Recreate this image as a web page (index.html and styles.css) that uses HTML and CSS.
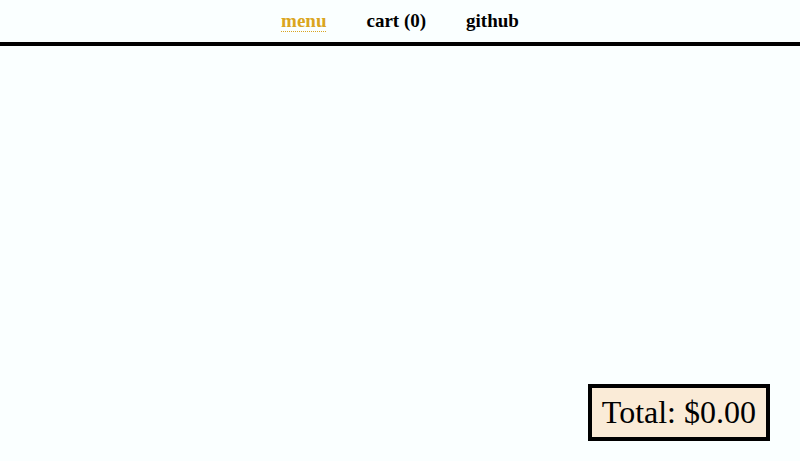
FILE: index.html
```html
<!DOCTYPE html>
<html lang="en">
<head>
<meta charset="utf-8">
<meta name="viewport" content="width=device-width, initial-scale=1">
<title>Menu</title>
<link rel="stylesheet" href="styles.css">
</head>
<body>
<nav class="nav">
  <a class="nav-link active" href="#menu">menu</a>
  <a class="nav-link" href="#cart">cart (0)</a>
  <a class="nav-link" href="#github">github</a>
</nav>
<main class="content"></main>
<div class="total">Total: $0.00</div>
</body>
</html>
```
FILE: styles.css
```css
body {
  margin: 0;
  min-height: 100vh;
  background: #faffff;
  color: #000;
  font-family: "Liberation Serif", serif;
}

.nav {
  display: flex;
  justify-content: center;
  gap: 40px;
  padding: 10px 0;
  border-bottom: 4px solid #000;
}

.nav-link {
  color: #000;
  font-size: 19px;
  line-height: 21px;
  font-weight: bold;
  text-decoration: none;
  border-bottom: 1px dotted transparent;
}

.nav-link.active {
  color: goldenrod;
  border-bottom-color: goldenrod;
}

.total {
  position: fixed;
  right: 30px;
  bottom: 20px;
  padding: 6px 10px;
  border: 4px solid #000;
  background: antiquewhite;
  font-size: 32px;
  line-height: 37px;
}
```
